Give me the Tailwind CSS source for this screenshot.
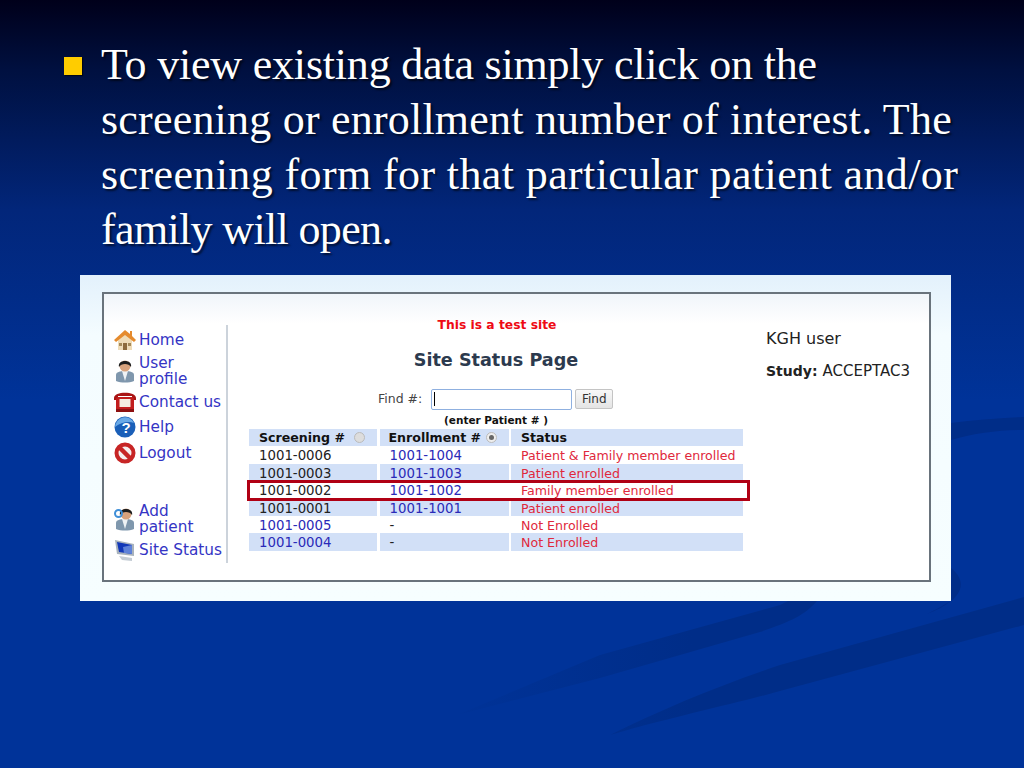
<!DOCTYPE html>
<html lang="en">
<head>
    <meta charset="UTF-8">
    <title>Site Status slide</title>
    <script src="https://cdn.jsdelivr.net/npm/@tailwindcss/browser@4"></script>
</head>
<body class="m-0">
<div class="relative w-[1024px] h-[768px] overflow-hidden bg-[linear-gradient(180deg,#00001a_0px,#001040_70px,#02267a_210px,#003399_400px,#003399_768px)]">

    <!-- background swooshes -->
    <svg class="absolute inset-0" width="1024" height="768" viewBox="0 0 1024 768">
        <defs>
            <linearGradient id="fade" x1="440" y1="0" x2="800" y2="0" gradientUnits="userSpaceOnUse">
                <stop offset="0" stop-color="#002d88" stop-opacity="0"/>
                <stop offset="0.7" stop-color="#002d88" stop-opacity="1"/>
            </linearGradient>
        </defs>
        <path fill="url(#fade)" d="M1024 597 L780 665 C720 685 660 710 610 735 C680 715 730 705 780 691 L1024 625 Z"/>
        <path fill="url(#fade)" d="M817 601 C805 615 790 622 760 632 L600 678 L457 715 L600 655 L780 605 L800 595 Z"/>
        <path fill="#002d88" d="M951 423 C975 420 1000 418 1024 417 L1024 430 C1000 430 975 433 951 440 Z"/>
        <path fill="#002d88" d="M951 568 C966 580 968 598 927 614 C940 608 945 604 951 601 Z"/>
    </svg>

    <!-- slide text -->
    <div class="relative flex pt-[37px] pl-[64px] font-['Liberation_Serif',serif] text-[44px] leading-[55px] text-white [text-shadow:2px_2px_2px_#00000099]">
        <div class="w-[18px] h-[18px] mt-[20px] mr-[19px] bg-[#ffcc00] shadow-[1px_1px_1px_#00000099]"></div>
        <div class="whitespace-nowrap">
            <div class="tracking-[-0.2px]">To view existing data simply click on the</div>
            <div class="tracking-[0.21px]">screening or enrollment number of interest. The</div>
            <div class="tracking-[0.39px]">screening form for that particular patient and/or</div>
            <div class="tracking-[-0.65px]">family will open.</div>
        </div>
    </div>

    <!-- pasted screenshot -->
    <div class="relative ml-[80px] mt-[18px] w-[871px] h-[326px] pt-[17px] pl-[22px] bg-[linear-gradient(180deg,#e3f1fc_0px,#f4fcff_60px,#f6feff_326px)]">
        <div class="relative w-[829px] h-[290px] border-2 border-[#69737c] bg-[linear-gradient(180deg,#f0f5fa_0px,#ffffff_30px)] font-['DejaVu_Sans',sans-serif] flex">

            <!-- side menu -->
            <div class="shrink-0 w-[114px] h-[238px] mt-[31px] ml-[10px] pt-px border-r-2 border-[#ccd3db] text-[15.3px] leading-[16px] text-[#3434c4] flex flex-col whitespace-nowrap">
                <div class="flex items-center gap-[3px] h-[26px] pt-[2px]">
                    <svg width="22" height="22" viewBox="0 0 22 22"><path d="M4 11 L11 5 L18 11 V21 H4 Z" fill="#efdcb8"/><path d="M11 1 L16 5 V2 H18 V7 L22 11 L20 13 L11 6 L2 13 L0 11 Z" fill="#e58b2e"/><rect x="9" y="14" width="4" height="7" fill="#8d6a3c"/><rect x="5" y="14" width="3" height="3" fill="#a58a5a"/><rect x="14" y="14" width="3" height="3" fill="#a58a5a"/></svg>
                    <span>Home</span>
                </div>
                <div class="flex items-center gap-[3px] h-[36px] mt-[1px]">
                    <svg width="22" height="24" viewBox="0 0 22 24"><path d="M2 22 V16 C2 13 6 12 11 12 C16 12 20 13 20 16 V22 C15 24 7 24 2 22 Z" fill="#7f97ad"/><path d="M8 12 H14 L11 22 Z" fill="#eef2f5"/><circle cx="11" cy="7" r="5.5" fill="#d8a27c"/><path d="M5 8 C3 0 19 0 17 8 C15 4 7 4 5 8 Z" fill="#1c1c1c"/></svg>
                    <span>User<br>profile</span>
                </div>
                <div class="flex items-center gap-[3px] h-[22px] mt-[2px]">
                    <svg width="22" height="22" viewBox="0 0 22 22"><path d="M0 7 C0 0 22 0 22 7 V9 H18 V5 H4 V9 H0 Z" fill="#a91414"/><rect x="2" y="6" width="18" height="15" rx="2" fill="#c21d1d"/><rect x="5.5" y="8" width="11" height="8" fill="#f4ece0"/><rect x="2" y="18" width="18" height="3" fill="#8d1010"/></svg>
                    <span>Contact us</span>
                </div>
                <div class="flex items-center gap-[3px] h-[22px] mt-[3px]">
                    <svg width="22" height="22" viewBox="0 0 22 22"><circle cx="11" cy="11" r="10.5" fill="#1a5fb8"/><path d="M1 11 A10 10 0 0 1 20 7 C15 5 7 6 1 11 Z" fill="#6aa9e6"/><text x="12" y="16.5" text-anchor="middle" font-size="15" font-weight="700" fill="#fff" font-family="Liberation Sans">?</text></svg>
                    <span>Help</span>
                </div>
                <div class="flex items-center gap-[3px] h-[22px] mt-[4px]">
                    <svg width="22" height="22" viewBox="0 0 22 22"><circle cx="11" cy="11" r="8.5" fill="#f5eeee" stroke="#c72525" stroke-width="4"/><path d="M5 5 L17 17" stroke="#c72525" stroke-width="4.5"/></svg>
                    <span>Logout</span>
                </div>
                <div class="flex items-center gap-[3px] h-[36px] mt-[37px]">
                    <svg width="22" height="24" viewBox="0 0 22 24"><path d="M2 22 V16 C2 13 6 12 11 12 C16 12 20 13 20 16 V22 C15 24 7 24 2 22 Z" fill="#7f97ad"/><path d="M8 12 H14 L11 22 Z" fill="#eef2f5"/><circle cx="12" cy="7" r="5.5" fill="#d8a27c"/><path d="M6 8 C4 0 20 0 18 8 C16 4 8 4 6 8 Z" fill="#1c1c1c"/><circle cx="4.5" cy="6.5" r="3.5" fill="none" stroke="#3f8fd8" stroke-width="2"/></svg>
                    <span>Add<br>patient</span>
                </div>
                <div class="flex items-center gap-[3px] h-[22px] mt-[2px]">
                    <svg width="22" height="22" viewBox="0 0 22 22"><path d="M1 1 L20 5 V17 L3 15 Z" fill="#a8b2bc"/><path d="M3 3 L18 6 V15 L5 13 Z" fill="#1238b8"/><path d="M9 8 L18 6 V15 L10 14 Z" fill="#5f82d8"/><path d="M5 17 L18 19 V22 L8 21 Z" fill="#c4ccd4"/></svg>
                    <span>Site Status</span>
                </div>
            </div>

            <!-- main column -->
            <div class="shrink-0 w-[494px] ml-[21px] flex flex-col items-stretch">
                <div class="mt-[23px] pl-[2px] text-center text-[12.3px] leading-[16px] font-semibold text-[#ee0a14]">This is a test site</div>
                <div class="mt-[17px] text-center text-[17.6px] leading-[20px] font-bold text-[#2c3a4e]">Site Status Page</div>
                <div class="mt-[18px] h-[22px] flex items-center text-[12.5px] text-[#444]">
                    <span class="ml-[129px]">Find #:</span>
                    <div class="ml-[9px] w-[141px] h-[21px] border border-[#8fb0e0] rounded-[2px] bg-white flex items-center pl-[2px]"><div class="w-px h-[14px] bg-black"></div></div>
                    <div class="ml-[3px] w-[38px] h-[20px] border border-[#c4c4c4] rounded-[2px] bg-[linear-gradient(180deg,#f8f8f8,#e4e4e4)] text-center text-[12px] leading-[18px] text-[#333]">Find</div>
                </div>
                <div class="mt-[3px] text-center text-[10.5px] leading-[14px] font-bold text-[#111]">(enter Patient # )</div>

                <div class="grid grid-cols-[128px_129px_232px] gap-x-[2.5px] auto-rows-[17.4px] mt-[2px] text-[13.3px] leading-[19px] whitespace-nowrap">
                    <div class="bg-[#d2e0f7] pl-[10px] font-semibold text-[12.6px] text-[#111] flex items-center">Screening # <span class="ml-[9px] w-[11px] h-[11px] rounded-full border border-[#bbb] bg-[#ddd]"></span></div>
                    <div class="bg-[#d2e0f7] pl-[9px] font-semibold text-[12.6px] text-[#111] flex items-center">Enrollment # <span class="ml-[5px] w-[11px] h-[11px] rounded-full border border-[#bbb] bg-[#eee] flex items-center justify-center"><span class="w-[5px] h-[5px] rounded-full bg-[#666]"></span></span></div>
                    <div class="bg-[#d2e0f7] pl-[10px] font-semibold text-[12.6px] leading-[17px] text-[#111]">Status</div>

                    <div class="pl-[10px] text-[#222]">1001-0006</div>
                    <div class="pl-[10px] text-[#2a2ab8]">1001-1004</div>
                    <div class="pl-[10px] text-[12.6px] text-[#e0283c]">Patient &amp; Family member enrolled</div>

                    <div class="bg-[#d2e0f7] pl-[10px] text-[#222]">1001-0003</div>
                    <div class="bg-[#d2e0f7] pl-[10px] text-[#2a2ab8]">1001-1003</div>
                    <div class="bg-[#d2e0f7] pl-[10px] text-[12.6px] text-[#e0283c]">Patient enrolled</div>

                    <div class="pl-[10px] text-[#222]">1001-0002</div>
                    <div class="pl-[10px] text-[#2a2ab8]">1001-1002</div>
                    <div class="pl-[10px] text-[12.6px] text-[#e0283c]">Family member enrolled</div>

                    <div class="bg-[#d2e0f7] pl-[10px] text-[#222]">1001-0001</div>
                    <div class="bg-[#d2e0f7] pl-[10px] text-[#2a2ab8]">1001-1001</div>
                    <div class="bg-[#d2e0f7] pl-[10px] text-[12.6px] text-[#e0283c]">Patient enrolled</div>

                    <div class="pl-[10px] text-[#2a2ab8]">1001-0005</div>
                    <div class="pl-[10px] text-[#222]">-</div>
                    <div class="pl-[10px] text-[12.6px] text-[#e0283c]">Not Enrolled</div>

                    <div class="bg-[#d2e0f7] pl-[10px] text-[#2a2ab8]">1001-0004</div>
                    <div class="bg-[#d2e0f7] pl-[10px] text-[#222]">-</div>
                    <div class="bg-[#d2e0f7] pl-[10px] text-[12.6px] text-[#e0283c]">Not Enrolled</div>
                </div>
            </div>

            <!-- user info -->
            <div class="ml-[23px] mt-[36px] text-[16px] leading-[18px] text-[#222] whitespace-nowrap">
                <div>KGH user</div>
                <div class="mt-[14px]"><span class="font-semibold text-[14px]">Study:</span> <span class="text-[15px]">ACCEPTAC3</span></div>
            </div>

            <!-- red highlight drawn over the row -->
            <div class="absolute left-[143px] top-[186px] w-[503px] h-[21px] border-[3px] border-[#b00014]"></div>
        </div>
    </div>
</div>
</body>
</html>
